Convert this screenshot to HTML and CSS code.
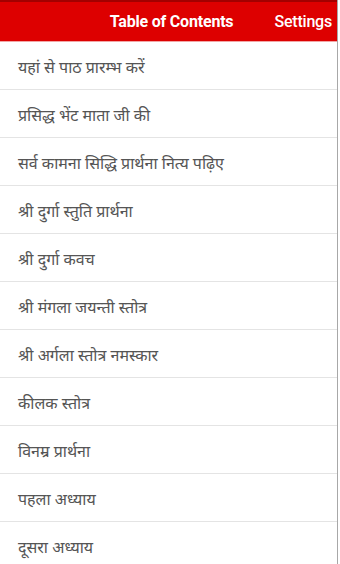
FILE: index.html
```html
<!DOCTYPE html>
<html lang="hi">
<head>
<meta charset="utf-8">
<link rel="stylesheet" href="styles.css">
</head>
<body>
<div class="app">
  <header class="bar">
    <span class="title">Table of Contents</span>
    <span class="settings">Settings</span>
  </header>
  <ul class="list">
    <li class="item">यहां से पाठ प्रारम्भ करें</li>
    <li class="item">प्रसिद्ध भेंट माता जी की</li>
    <li class="item">सर्व कामना सिद्धि प्रार्थना नित्य पढ़िए</li>
    <li class="item">श्री दुर्गा स्तुति प्रार्थना</li>
    <li class="item">श्री दुर्गा कवच</li>
    <li class="item">श्री मंगला जयन्ती स्तोत्र</li>
    <li class="item">श्री अर्गला स्तोत्र नमस्कार</li>
    <li class="item">कीलक स्तोत्र</li>
    <li class="item">विनम्र प्रार्थना</li>
    <li class="item">पहला अध्याय</li>
    <li class="item">दूसरा अध्याय</li>
  </ul>
</div>
</body>
</html>
```
FILE: styles.css
```css
html, body {
  margin: 0;
  padding: 0;
  background: #ffffff;
  height: 564px;
  overflow: hidden;
}
.app {
  width: 338px;
  height: 564px;
  border-right: 1px solid #a8a8a8;
  box-sizing: border-box;
  background: #fff;
}
.bar {
  height: 42px;
  box-sizing: border-box;
  background: #dd0000;
  border-top: 2px solid #a30000;
  border-bottom: 1px solid #f2a6a6;
  display: flex;
  align-items: center;
  justify-content: flex-end;
  padding-right: 5px;
  gap: 41px;
  font-family: Roboto, "Liberation Sans", sans-serif;
  color: #ffffff;
  font-size: 16px;
  letter-spacing: -0.2px;
}
.title {
  font-weight: 700;
}
.settings {
  font-weight: 500;
}
.list {
  list-style: none;
  margin: 0;
  padding: 0;
}
.item {
  height: 48px;
  box-sizing: border-box;
  border-bottom: 1px solid #e4e4e4;
  display: flex;
  align-items: center;
  padding-left: 18px;
  padding-top: 2px;
  font-family: "Noto Sans", "Noto Sans Devanagari", sans-serif;
  font-size: 16px;
  color: #555555;
}
```
